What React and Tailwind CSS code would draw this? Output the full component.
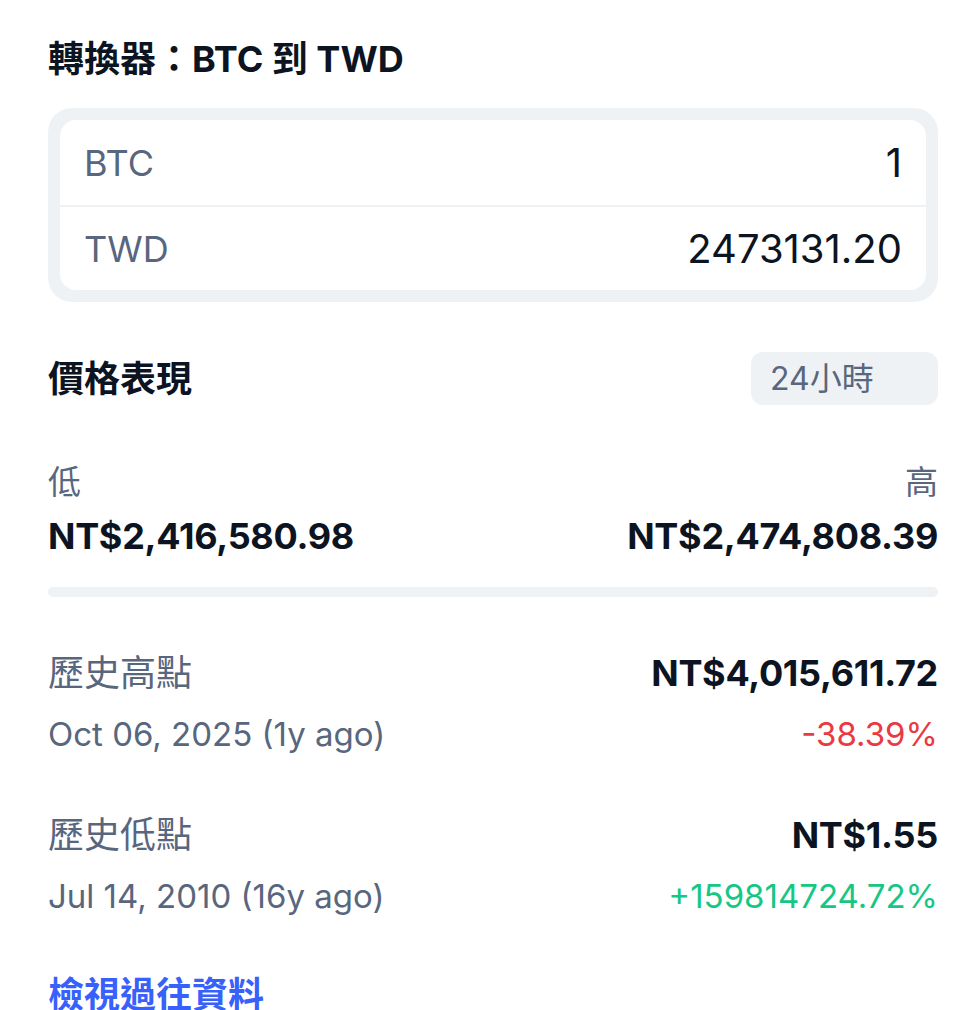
import React from "react";

const FONT = { fontFamily: 'Inter, "Noto Sans CJK TC", "Noto Sans", sans-serif' };

function ConvRow({ label, value, divider }) {
  return (
    <div className={`flex items-center justify-between px-[24px] ${divider ? "h-[87px] border-b-2 border-[#eff2f5]" : "h-[83px]"}`}>
      <span className="text-[36px] text-[#58667e]">{label}</span>
      <span className="text-[40px] text-[#0d1421]">{value}</span>
    </div>
  );
}

function HistoryItem({ label, price, date, change, up, className }) {
  return (
    <div className={className}>
      <div className="flex items-center justify-between leading-[60px]">
        <span className="text-[36px] text-[#58667e]">{label}</span>
        <span className="text-[36px] font-bold tracking-[-0.3px] text-[#0d1421]">{price}</span>
      </div>
      <div className="mt-[1px] flex items-center justify-between leading-[60px]">
        <span className="text-[33px] text-[#58667e]">{date}</span>
        <span className={`text-[33px] ${up ? "text-[#16c784]" : "text-[#ea3943]"}`}>{change}</span>
      </div>
    </div>
  );
}

export default function App() {
  return (
    <div className="min-h-[1010px] w-[960px] bg-white px-[48px] pt-[32px] pr-[22px]" style={FONT}>
      <h2 className="text-[36px] font-bold leading-[54px] text-[#0d1421]">轉換器：BTC 到 TWD</h2>

      <div className="mt-[22px] rounded-[24px] bg-[#eff2f5] p-[12px]">
        <div className="rounded-[16px] bg-white">
          <ConvRow label="BTC" value="1" divider />
          <ConvRow label="TWD" value="2473131.20" />
        </div>
      </div>

      {/* price performance */}
      <div className="mt-[50px] flex h-[53px] items-center justify-between">
        <h2 className="text-[36px] font-bold text-[#0d1421]">價格表現</h2>
        <div className="flex h-[53px] w-[187px] items-center rounded-[12px] bg-[#eff2f5] pl-[19px] text-[32px] text-[#58667e]">
          24小時
        </div>
      </div>

      <div className="mt-[53px] flex justify-between text-[33px] leading-[48px] text-[#58667e]">
        <span>低</span>
        <span>高</span>
      </div>
      <div className="mt-[6px] flex justify-between text-[36px] font-bold leading-[48px] tracking-[-0.3px] text-[#0d1421]">
        <span>NT$2,416,580.98</span>
        <span>NT$2,474,808.39</span>
      </div>
      <div className="mt-[27px] h-[10px] rounded-full bg-[#eff2f5]" />

      <HistoryItem
        className="mt-[46px]"
        label="歷史高點"
        price="NT$4,015,611.72"
        date="Oct 06, 2025 (1y ago)"
        change="-38.39%"
      />
      <HistoryItem
        className="mt-[41px]"
        label="歷史低點"
        price="NT$1.55"
        date="Jul 14, 2010 (16y ago)"
        change="+159814724.72%"
        up
      />

      <div className="mt-[42px] text-[36px] font-bold leading-[54px] text-[#3861fb]">檢視過往資料</div>
    </div>
  );
}
